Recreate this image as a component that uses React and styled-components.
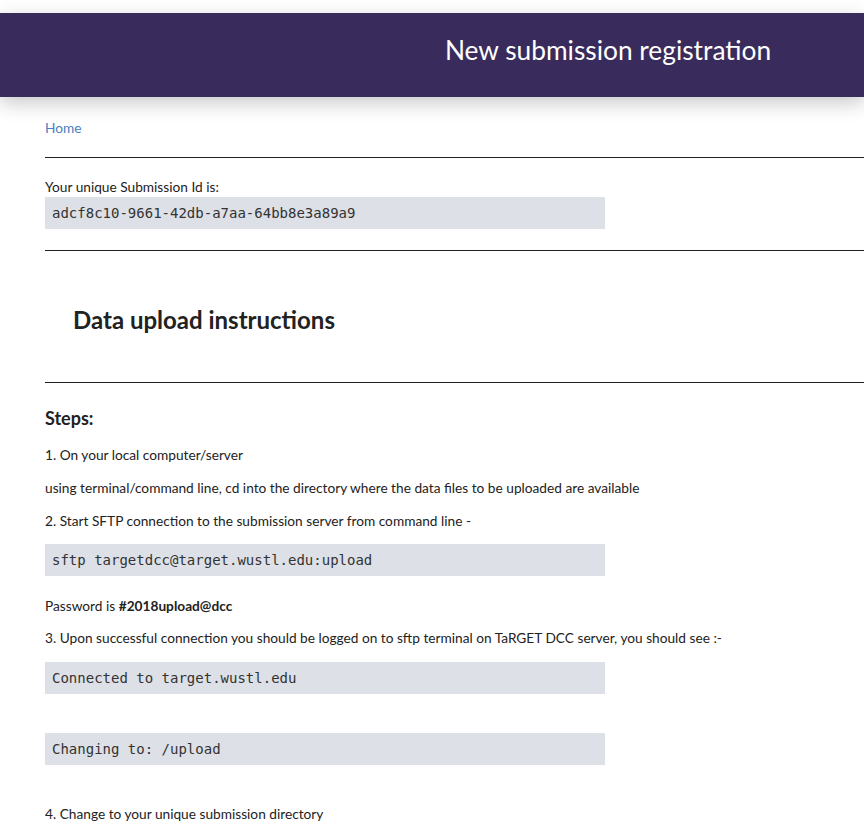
import React from 'react';
import styled, { createGlobalStyle } from 'styled-components';

const GlobalStyle = createGlobalStyle`
  html, body {
    margin: 0;
    padding: 0;
    background: #fff;
    font-family: Lato, 'Open Sans', sans-serif;
    color: #222;
    overflow-x: hidden;
  }
`;

const Header = styled.header`
  margin-top: 13px;
  height: 84px;
  box-sizing: border-box;
  padding-bottom: 10px;
  background-color: #392c5c;
  box-shadow: 0 6px 18px rgba(0, 0, 0, 0.22);
  display: flex;
  align-items: center;
  justify-content: center;
  padding-left: 352px;
  position: relative;
  z-index: 1;
`;

const Title = styled.h1`
  margin: 0;
  font-size: 26.3px;
  font-weight: 400;
  color: #fff;
`;

const Content = styled.main`
  display: flex;
  flex-direction: column;
  align-items: flex-start;
  padding-left: 45px;
  padding-bottom: 40px;
`;

const HomeLink = styled.a`
  margin-top: 23px;
  font-size: 13.7px;
  line-height: 16px;
  color: #4a7fc1;
  text-decoration: none;
`;

const Rule = styled.hr`
  align-self: stretch;
  margin: ${({ mt }) => mt || 21}px 0 0 0;
  border: 0;
  border-top: 1px solid #222;
  height: 0;
`;

const Text = styled.p`
  margin: ${({ mt }) => mt || 17}px 0 0 0;
  font-size: 13.7px;
  line-height: 16px;
  color: #222;
  white-space: nowrap;

  b {
    font-weight: 700;
  }
`;

const CodeBox = styled.div`
  margin-top: ${({ mt }) => mt || 16}px;
  width: 553px;
  height: 32px;
  padding-left: 7px;
  display: flex;
  align-items: center;
  background-color: #dde0e6;
  font-family: 'DejaVu Sans Mono', 'Liberation Mono', monospace;
  font-size: 14px;
  color: #333;
`;

const Heading = styled.h2`
  margin: 54px 0 0 28px;
  font-size: 24px;
  line-height: 29px;
  font-weight: 700;
  color: #222;
`;

const SubHeading = styled.h3`
  margin: 24px 0 0 0;
  font-size: 18px;
  line-height: 22px;
  font-weight: 700;
  color: #222;
`;

export default function App() {
  return (
    <>
      <GlobalStyle />
      <Header>
        <Title>New submission registration</Title>
      </Header>
      <Content>
        <HomeLink href="#">Home</HomeLink>
        <Rule mt={21} />
        <Text mt={21}>Your unique Submission Id is:</Text>
        <CodeBox mt={2}>adcf8c10-9661-42db-a7aa-64bb8e3a89a9</CodeBox>
        <Rule mt={21} />
        <Heading>Data upload instructions</Heading>
        <Rule mt={48} />
        <SubHeading>Steps:</SubHeading>
        <Text mt={18}>1. On your local computer/server</Text>
        <Text>using terminal/command line, cd into the directory where the data files to be uploaded are available</Text>
        <Text>2. Start SFTP connection to the submission server from command line -</Text>
        <CodeBox mt={15}>sftp targetdcc@target.wustl.edu:upload</CodeBox>
        <Text mt={22}>
          Password is <b>#2018upload@dcc</b>
        </Text>
        <Text mt={16}>
          3. Upon successful connection you should be logged on to sftp terminal on TaRGET DCC server, you should see :-
        </Text>
        <CodeBox mt={16}>Connected to target.wustl.edu</CodeBox>
        <CodeBox mt={39}>Changing to: /upload</CodeBox>
        <Text mt={41}>4. Change to your unique submission directory</Text>
      </Content>
    </>
  );
}
